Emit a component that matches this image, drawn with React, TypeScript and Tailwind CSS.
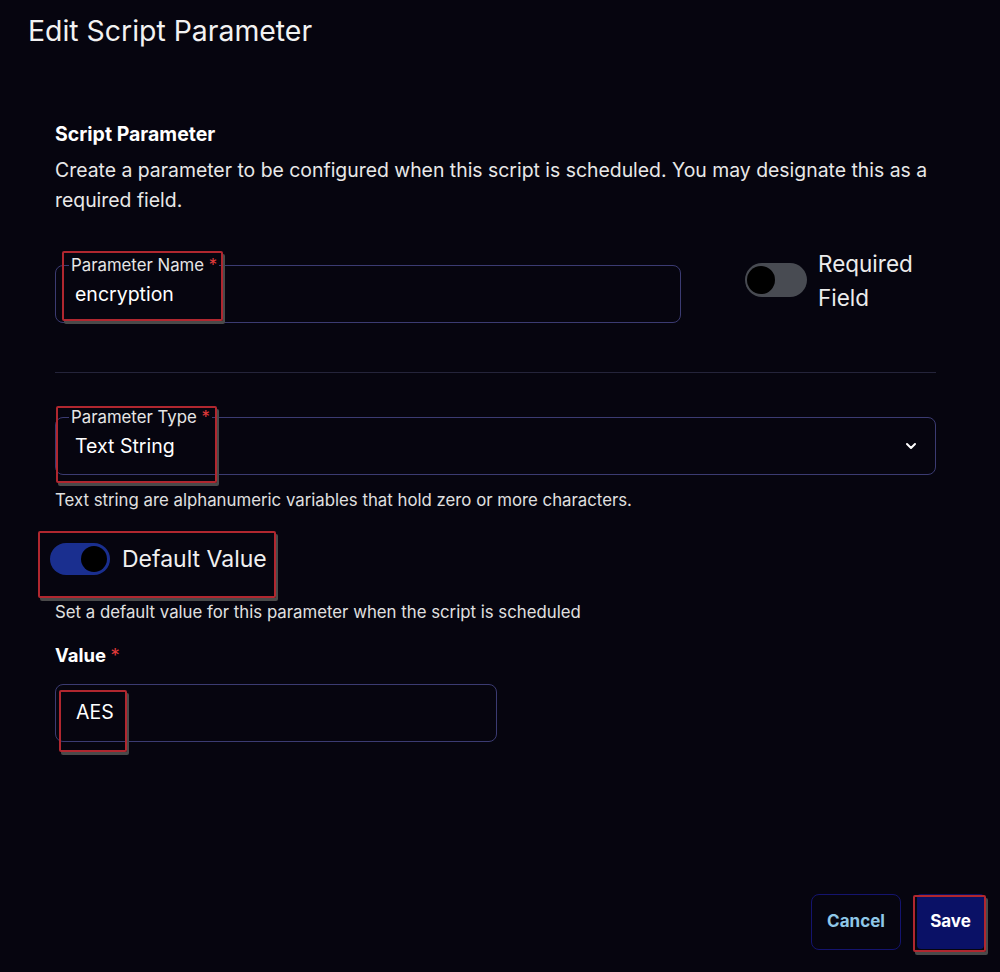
import React from "react";

const Ann = ({ x, y, w, h }: { x: number; y: number; w: number; h: number }) => (
  <div
    className="absolute border-2 border-[#b0272f] rounded-[2px] shadow-[2px_3px_0_#4a4a4a] pointer-events-none"
    style={{ left: x, top: y, width: w, height: h }}
  />
);

export default function App() {
  return (
    <div className="relative w-[1000px] h-[972px] bg-[#06050f] text-white overflow-hidden" style={{ fontFamily: "Inter, 'Open Sans', sans-serif" }}>
      <div className="pl-[28px] pt-[13px] text-[28.4px] leading-[36px] text-[#f2f2f2]">Edit Script Parameter</div>
      <div className="pl-[55px] pr-[50px] pt-[72px]">
        <div className="text-[19.5px] font-bold leading-[26px]">Script Parameter</div>
        <div className="mt-[8px] text-[19.4px] leading-[30px] text-[#e8e8e8]">
          Create a parameter to be configured when this script is scheduled. You may designate this as a required field.
        </div>
        <div className="mt-[50px] flex items-start">
          <div className="relative w-[626px] h-[58px] border border-[#3b3b72] rounded-[8px]">
            <div className="absolute left-[13px] -top-[11px] px-[2px] bg-[#06050f] text-[16.8px] leading-[20px] text-[#e6e6e6]">Parameter Name <span className="text-[#e03a3a]">*</span></div>
            <div className="pl-[19px] pt-[15px] text-[19.5px] leading-[26px]">encryption</div>
          </div>
          <div className="ml-[64px] flex items-start -mt-[18px]">
            <div className="mt-[16px] w-[62px] h-[34px] rounded-full bg-[#484b52] flex items-center pl-[2px]">
              <div className="w-[28px] h-[28px] rounded-full bg-black" />
            </div>
            <div className="ml-[11px] text-[22.5px] leading-[34px] text-[#ececec]">Required<br />Field</div>
          </div>
        </div>
        <div className="mt-[49px] h-px bg-[#24243a] w-[881px]" />
        <div className="mt-[44px] relative w-[881px] h-[58px] border border-[#3b3b72] rounded-[8px]">
          <div className="absolute left-[13px] -top-[11px] px-[2px] bg-[#06050f] text-[16.8px] leading-[20px] text-[#e6e6e6]">Parameter Type <span className="text-[#e03a3a]">*</span></div>
          <div className="pl-[19px] pt-[15px] text-[19.5px] leading-[26px]">Text String</div>
          <svg className="absolute right-[16px] top-[20px]" width="16" height="16" viewBox="0 0 24 24" fill="none" stroke="white" strokeWidth="3" strokeLinecap="round" strokeLinejoin="round"><path d="M6 9l6 6 6-6" /></svg>
        </div>
        <div className="mt-[14px] text-[16.8px] leading-[22px] text-[#e0e0e0]">Text string are alphanumeric variables that hold zero or more characters.</div>
        <div className="mt-[32px] -ml-[5px] flex items-center">
          <div className="w-[60px] h-[32px] rounded-full bg-[#1a2f8f] flex items-center justify-end pr-[3px]">
            <div className="w-[26px] h-[26px] rounded-full bg-black" />
          </div>
          <div className="ml-[12px] text-[23px] leading-[32px] text-[#f0f0f0]">Default Value</div>
        </div>
        <div className="mt-[26px] text-[16.8px] leading-[22px] text-[#e0e0e0]">Set a default value for this parameter when the script is scheduled</div>
        <div className="mt-[20px] text-[18.5px] font-bold leading-[24px]">Value <span className="text-[#e03a3a] font-normal">*</span></div>
        <div className="mt-[17px] w-[442px] h-[58px] border border-[#3b3b72] rounded-[8px] pl-[20px] flex items-center text-[19.5px]">AES</div>
      </div>
      <div className="absolute right-[16px] bottom-[22px] flex gap-[16px]">
        <button className="w-[90px] h-[56px] rounded-[8px] border border-[#14146e] text-[#8fc7e8] font-bold text-[17px]">Cancel</button>
        <button className="w-[67px] h-[55px] rounded-[4px] bg-[#0a1166] text-white font-bold text-[17px]">Save</button>
      </div>
      <Ann x={62} y={251} w={161} h={70} />
      <Ann x={56} y={406} w={161} h={77} />
      <Ann x={38} y={531} w={238} h={67} />
      <Ann x={59} y={690} w={68} h={62} />
      <Ann x={913} y={895} w={73} h={57} />
    </div>
  );
}
